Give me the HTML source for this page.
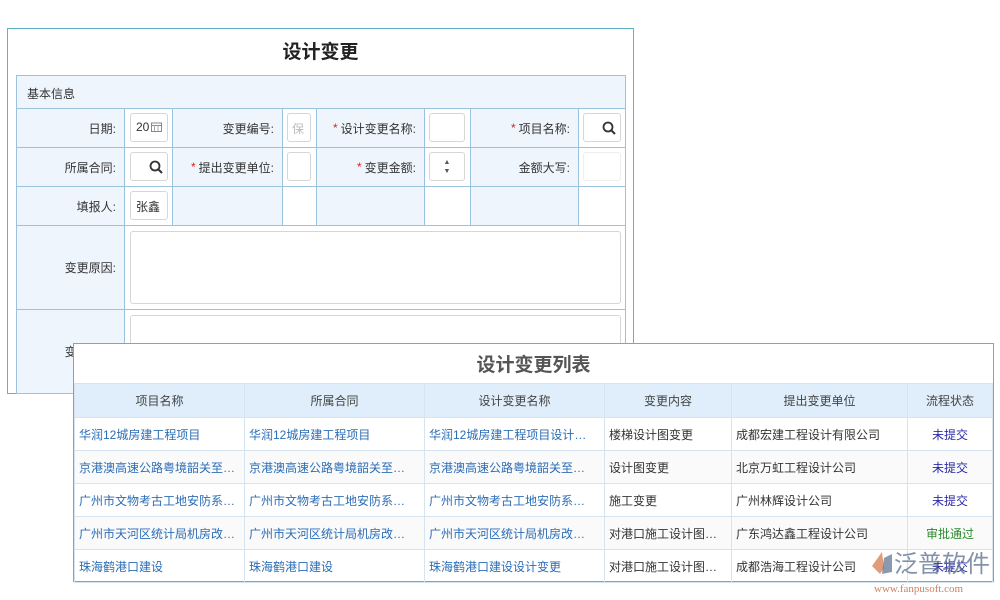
<!DOCTYPE html>
<html><head><meta charset="utf-8"><style>
*{margin:0;padding:0;box-sizing:border-box}
body{width:1000px;height:600px;background:#fff;position:relative;overflow:hidden;font-family:"Liberation Sans","Noto Sans CJK SC",sans-serif;font-size:12px;color:#333}
.abs{position:absolute}
#top{left:7px;top:28px;width:627px;height:366px;border:1px solid #5fb3c9;background:#fff}
.t1{left:0;width:100%;top:8px;text-align:center;font-size:19px;font-weight:bold;color:#222}
.c{position:absolute;border:1px solid #9cc3dd;background:#eef5fd}
.w{background:#fff}
.lab{display:flex;align-items:center;justify-content:flex-end;padding-right:8px;color:#333}
.star{color:#d22;margin-right:3px}
.inp{position:absolute;border:1px solid #d6d6d6;border-radius:3px;background:#fff;white-space:nowrap;overflow:hidden}
#bot{left:73px;top:343px;width:921px;height:239px;border:1px solid #5fb3c9;background:#fff}
table{position:absolute;left:0;top:39px;border-collapse:collapse;width:919px}
td,th{border:1px solid #d5e4ef;height:33px;font-weight:normal;padding:0 4px;white-space:nowrap;overflow:hidden}
th{background:#dfeefa;color:#444;text-align:center;height:34px}
td.l{color:#2c6db5}
tr:nth-child(odd) td{background:#fafafa}
</style></head><body>
<div id="top" class="abs">
<div class="abs t1">设计变更</div>
</div>
<div class="c" style="left:16px;top:75px;width:610px;height:34px;padding:9px 10px;">基本信息</div>
<div class="c lab" style="left:16px;top:108px;width:109px;height:40px">日期:</div>
<div class="c w" style="left:124px;top:108px;width:49px;height:40px"></div>
<div class="c lab" style="left:172px;top:108px;width:111px;height:40px">变更编号:</div>
<div class="c w" style="left:282px;top:108px;width:35px;height:40px"></div>
<div class="c lab" style="left:316px;top:108px;width:109px;height:40px"><span class="star">*</span>设计变更名称:</div>
<div class="c w" style="left:424px;top:108px;width:47px;height:40px"></div>
<div class="c lab" style="left:470px;top:108px;width:109px;height:40px"><span class="star">*</span>项目名称:</div>
<div class="c w" style="left:578px;top:108px;width:48px;height:40px"></div>
<div class="c lab" style="left:16px;top:147px;width:109px;height:40px">所属合同:</div>
<div class="c w" style="left:124px;top:147px;width:49px;height:40px"></div>
<div class="c lab" style="left:172px;top:147px;width:111px;height:40px"><span class="star">*</span>提出变更单位:</div>
<div class="c w" style="left:282px;top:147px;width:35px;height:40px"></div>
<div class="c lab" style="left:316px;top:147px;width:109px;height:40px"><span class="star">*</span>变更金额:</div>
<div class="c w" style="left:424px;top:147px;width:47px;height:40px"></div>
<div class="c lab" style="left:470px;top:147px;width:109px;height:40px">金额大写:</div>
<div class="c w" style="left:578px;top:147px;width:48px;height:40px"></div>
<div class="c lab" style="left:16px;top:186px;width:109px;height:40px">填报人:</div>
<div class="c w" style="left:124px;top:186px;width:49px;height:40px"></div>
<div class="c" style="left:172px;top:186px;width:111px;height:40px"></div>
<div class="c w" style="left:282px;top:186px;width:35px;height:40px"></div>
<div class="c" style="left:316px;top:186px;width:109px;height:40px"></div>
<div class="c w" style="left:424px;top:186px;width:47px;height:40px"></div>
<div class="c" style="left:470px;top:186px;width:109px;height:40px"></div>
<div class="c w" style="left:578px;top:186px;width:48px;height:40px"></div>
<div class="c lab" style="left:16px;top:225px;width:109px;height:85px">变更原因:</div>
<div class="c w" style="left:124px;top:225px;width:502px;height:85px"></div>
<div class="c lab" style="left:16px;top:309px;width:109px;height:85px">变更内容:</div>
<div class="c w" style="left:124px;top:309px;width:502px;height:85px"></div>
<div class="inp" style="left:130px;top:113px;width:38px;height:29px;padding:6px 5px">20<svg width="11" height="11" style="margin-left:2px;vertical-align:-1px"><rect x="0.5" y="2" width="10" height="8.5" fill="none" stroke="#888"/><line x1="0" y1="4.5" x2="11" y2="4.5" stroke="#888"/><line x1="3.5" y1="4" x2="3.5" y2="10" stroke="#aaa"/><line x1="7" y1="4" x2="7" y2="10" stroke="#aaa"/></svg></div>
<div class="inp" style="left:287px;top:113px;width:24px;height:29px;padding:6px 4px;color:#bbb">保</div>
<div class="inp" style="left:429px;top:113px;width:36px;height:29px"></div>
<div class="inp" style="left:583px;top:113px;width:38px;height:29px"><svg width="38" height="29"><circle cx="24" cy="13" r="4.5" fill="none" stroke="#333" stroke-width="1.8"/><line x1="27.5" y1="16.5" x2="31" y2="20" stroke="#333" stroke-width="2"/></svg></div>
<div class="inp" style="left:130px;top:152px;width:38px;height:29px"><svg width="38" height="29"><circle cx="24" cy="13" r="4.5" fill="none" stroke="#333" stroke-width="1.8"/><line x1="27.5" y1="16.5" x2="31" y2="20" stroke="#333" stroke-width="2"/></svg></div>
<div class="inp" style="left:287px;top:152px;width:24px;height:29px"></div>
<div class="inp" style="left:429px;top:152px;width:36px;height:29px;text-align:center;font-size:7px;line-height:9px;padding-top:5px;color:#555">▲<br>▼</div>
<div class="inp" style="left:583px;top:152px;width:38px;height:29px;border-color:#eee"></div>
<div class="inp" style="left:130px;top:191px;width:38px;height:29px;padding:6px 5px">张鑫</div>
<div class="inp" style="left:130px;top:231px;width:491px;height:73px"></div>
<div class="inp" style="left:130px;top:315px;width:491px;height:73px"></div>

<div id="bot" class="abs">
<div class="abs" style="left:0;width:100%;top:6px;text-align:center;font-size:19px;font-weight:bold;color:#555">设计变更列表</div>
<table>
<tr><th style="width:170px">项目名称</th><th style="width:180px">所属合同</th><th style="width:180px">设计变更名称</th><th style="width:127px">变更内容</th><th style="width:176px">提出变更单位</th><th>流程状态</th></tr>
<tr><td class="l">华润12城房建工程项目</td><td class="l">华润12城房建工程项目</td><td class="l">华润12城房建工程项目设计…</td><td>楼梯设计图变更</td><td>成都宏建工程设计有限公司</td><td style="text-align:center;color:#2a2aa8">未提交</td></tr>
<tr><td class="l">京港澳高速公路粤境韶关至…</td><td class="l">京港澳高速公路粤境韶关至…</td><td class="l">京港澳高速公路粤境韶关至…</td><td>设计图变更</td><td>北京万虹工程设计公司</td><td style="text-align:center;color:#2a2aa8">未提交</td></tr>
<tr><td class="l">广州市文物考古工地安防系…</td><td class="l">广州市文物考古工地安防系…</td><td class="l">广州市文物考古工地安防系…</td><td>施工变更</td><td>广州林辉设计公司</td><td style="text-align:center;color:#2a2aa8">未提交</td></tr>
<tr><td class="l">广州市天河区统计局机房改…</td><td class="l">广州市天河区统计局机房改…</td><td class="l">广州市天河区统计局机房改…</td><td>对港口施工设计图…</td><td>广东鸿达鑫工程设计公司</td><td style="text-align:center;color:#2e8a2e">审批通过</td></tr>
<tr><td class="l">珠海鹤港口建设</td><td class="l">珠海鹤港口建设</td><td class="l">珠海鹤港口建设设计变更</td><td>对港口施工设计图…</td><td>成都浩海工程设计公司</td><td style="text-align:center;color:#2a2aa8">未提交</td></tr>
</table>
</div>
<div class="abs" style="left:870px;top:550px;white-space:nowrap;font-size:24px;line-height:30px;color:rgba(90,110,140,.75)"><svg width="24" height="26" style="vertical-align:-4px"><path d="M12 2 L2 16 L10 24 L14 18 Z" fill="rgba(220,140,100,.85)"/><path d="M14 8 L22 4 L22 22 L12 24 Z" fill="rgba(90,110,140,.7)"/></svg>泛普软件</div>
<div class="abs" style="left:874px;top:583px;white-space:nowrap;font-size:11px;color:#d08060;font-family:'Liberation Serif',serif">www.fanpusoft.com</div>
</body></html>
